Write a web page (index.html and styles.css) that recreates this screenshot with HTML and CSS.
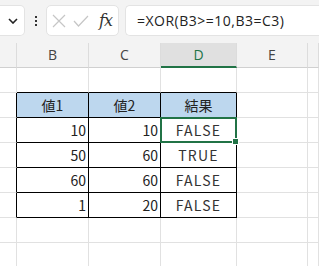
FILE: index.html
```html
<!DOCTYPE html>
<html lang="ja">
<head>
  <meta charset="UTF-8">
  <title>XOR</title>
  <link rel="stylesheet" href="styles.css">
</head>
<body>
  <!-- 数式バー -->
  <div class="toolbar">
    <div class="namebox">
      <svg width="10" height="6" viewBox="0 0 10 6"><path d="M1 1 L5 5 L9 1" fill="none" stroke="#222" stroke-width="1.6"/></svg>
    </div>
    <div class="dots"><span></span><span></span><span></span></div>
    <div class="actions">
      <svg width="14" height="14" viewBox="0 0 14 14"><path d="M1 1 L13 13 M13 1 L1 13" stroke="#c6c6c6" stroke-width="1.2"/></svg>
      <svg width="16" height="12" viewBox="0 0 16 12"><path d="M1 6 L5.5 11 L15 1" fill="none" stroke="#c6c6c6" stroke-width="1.2"/></svg>
      <span class="fx">fx</span>
    </div>
    <div class="formula">=XOR(B3&gt;=10,B3=C3)</div>
  </div>

  <!-- シート -->
  <div class="sheet">
    <div class="ch"></div><div class="ch">B</div><div class="ch">C</div><div class="ch sel">D</div><div class="ch">E</div><div class="ch"></div>

    <div class="c"></div><div class="c tb"></div><div class="c tb"></div><div class="c tb"></div><div class="c"></div><div class="c"></div>

    <div class="c tr"></div><div class="c t head">値1</div><div class="c t head">値2</div><div class="c t head">結果</div><div class="c"></div><div class="c"></div>

    <div class="c tr"></div><div class="c t num">10</div><div class="c t num">10</div><div class="c t txt active">FALSE</div><div class="c"></div><div class="c"></div>

    <div class="c tr"></div><div class="c t num">50</div><div class="c t num">60</div><div class="c t txt">TRUE</div><div class="c"></div><div class="c"></div>

    <div class="c tr"></div><div class="c t num">60</div><div class="c t num">60</div><div class="c t txt">FALSE</div><div class="c"></div><div class="c"></div>

    <div class="c tr"></div><div class="c t num">1</div><div class="c t num">20</div><div class="c t txt">FALSE</div><div class="c"></div><div class="c"></div>

    <div class="c"></div><div class="c"></div><div class="c"></div><div class="c"></div><div class="c"></div><div class="c"></div>

    <div class="c"></div><div class="c"></div><div class="c"></div><div class="c"></div><div class="c"></div><div class="c"></div>
  </div>
</body>
</html>
```

FILE: styles.css
```css
* {
  box-sizing: border-box;
}
body {
  margin: 0;
  width: 319px;
  height: 266px;
  overflow: hidden;
  background: #fff;
  font-family: "Noto Sans CJK JP", "Noto Sans", sans-serif;
  color: #222;
}
.toolbar {
  height: 43px;
  background: #f3f3f3;
  display: flex;
  align-items: flex-start;
  padding-top: 5px;
}
.namebox {
  width: 26px;
  height: 31px;
  margin-left: -1px;
  background: #fff;
  border: 1px solid #e3e3e3;
  border-left: none;
  border-radius: 0 5px 5px 0;
  display: flex;
  align-items: center;
  justify-content: flex-end;
  padding-right: 6px;
}
.dots {
  width: 21px;
  height: 31px;
  display: flex;
  flex-direction: column;
  align-items: center;
  justify-content: center;
  gap: 2px;
}
.dots span {
  width: 2px;
  height: 2px;
  background: #333;
}
.actions {
  width: 73px;
  height: 31px;
  background: #fff;
  border: 1px solid #e3e3e3;
  border-radius: 5px;
  display: flex;
  align-items: center;
  padding-left: 5px;
  gap: 7px;
}
.fx {
  font-family: "DejaVu Serif", serif;
  font-style: italic;
  font-size: 16px;
  color: #333;
  margin-left: 3px;
  letter-spacing: -1px;
}
.formula {
  flex: 1;
  height: 31px;
  margin-left: 6px;
  background: #fff;
  border: 1px solid #e3e3e3;
  border-right: none;
  border-radius: 5px 0 0 5px;
  padding-left: 11px;
  font-family: "Open Sans", "Noto Sans", sans-serif;
  font-size: 14px;
  letter-spacing: 0.5px;
  line-height: 29px;
  color: #222;
}
.sheet {
  display: grid;
  grid-template-columns: 17px 72px 72px 76px 71px 11px;
  grid-template-rows: 25px repeat(8, 25px);
}
.ch {
  background: #f3f3f3;
  border-right: 1px solid #dcdcdc;
  border-bottom: 1px solid #d0d0d0;
  font-family: "Open Sans", "Noto Sans", sans-serif;
  font-size: 14px;
  color: #444;
  text-align: center;
  line-height: 24px;
}
.ch.sel {
  background: #e0e0e0;
  color: #217346;
  border-bottom: 2px solid #217346;
}
.c {
  border-right: 1px solid #e1e1e1;
  border-bottom: 1px solid #e1e1e1;
  font-size: 14px;
  line-height: 24px;
  padding: 0 2px;
}
.c.tb {
  border-bottom-color: #000;
}
.c.tr {
  border-right-color: #000;
}
.c.t {
  border-right-color: #000;
  border-bottom-color: #000;
}
.head {
  background: #bdd7ee;
  text-align: center;
}
.num {
  text-align: right;
}
.txt {
  text-align: center;
  letter-spacing: 1.2px;
  color: #333;
}
.active {
  position: relative;
}
.active::before {
  content: "";
  position: absolute;
  left: -1px;
  top: -1px;
  right: -1px;
  bottom: -1px;
  border: 2px solid #217346;
}
.active::after {
  content: "";
  position: absolute;
  right: -3px;
  bottom: -3px;
  width: 5px;
  height: 5px;
  background: #217346;
  border: 1px solid #fff;
}
```
